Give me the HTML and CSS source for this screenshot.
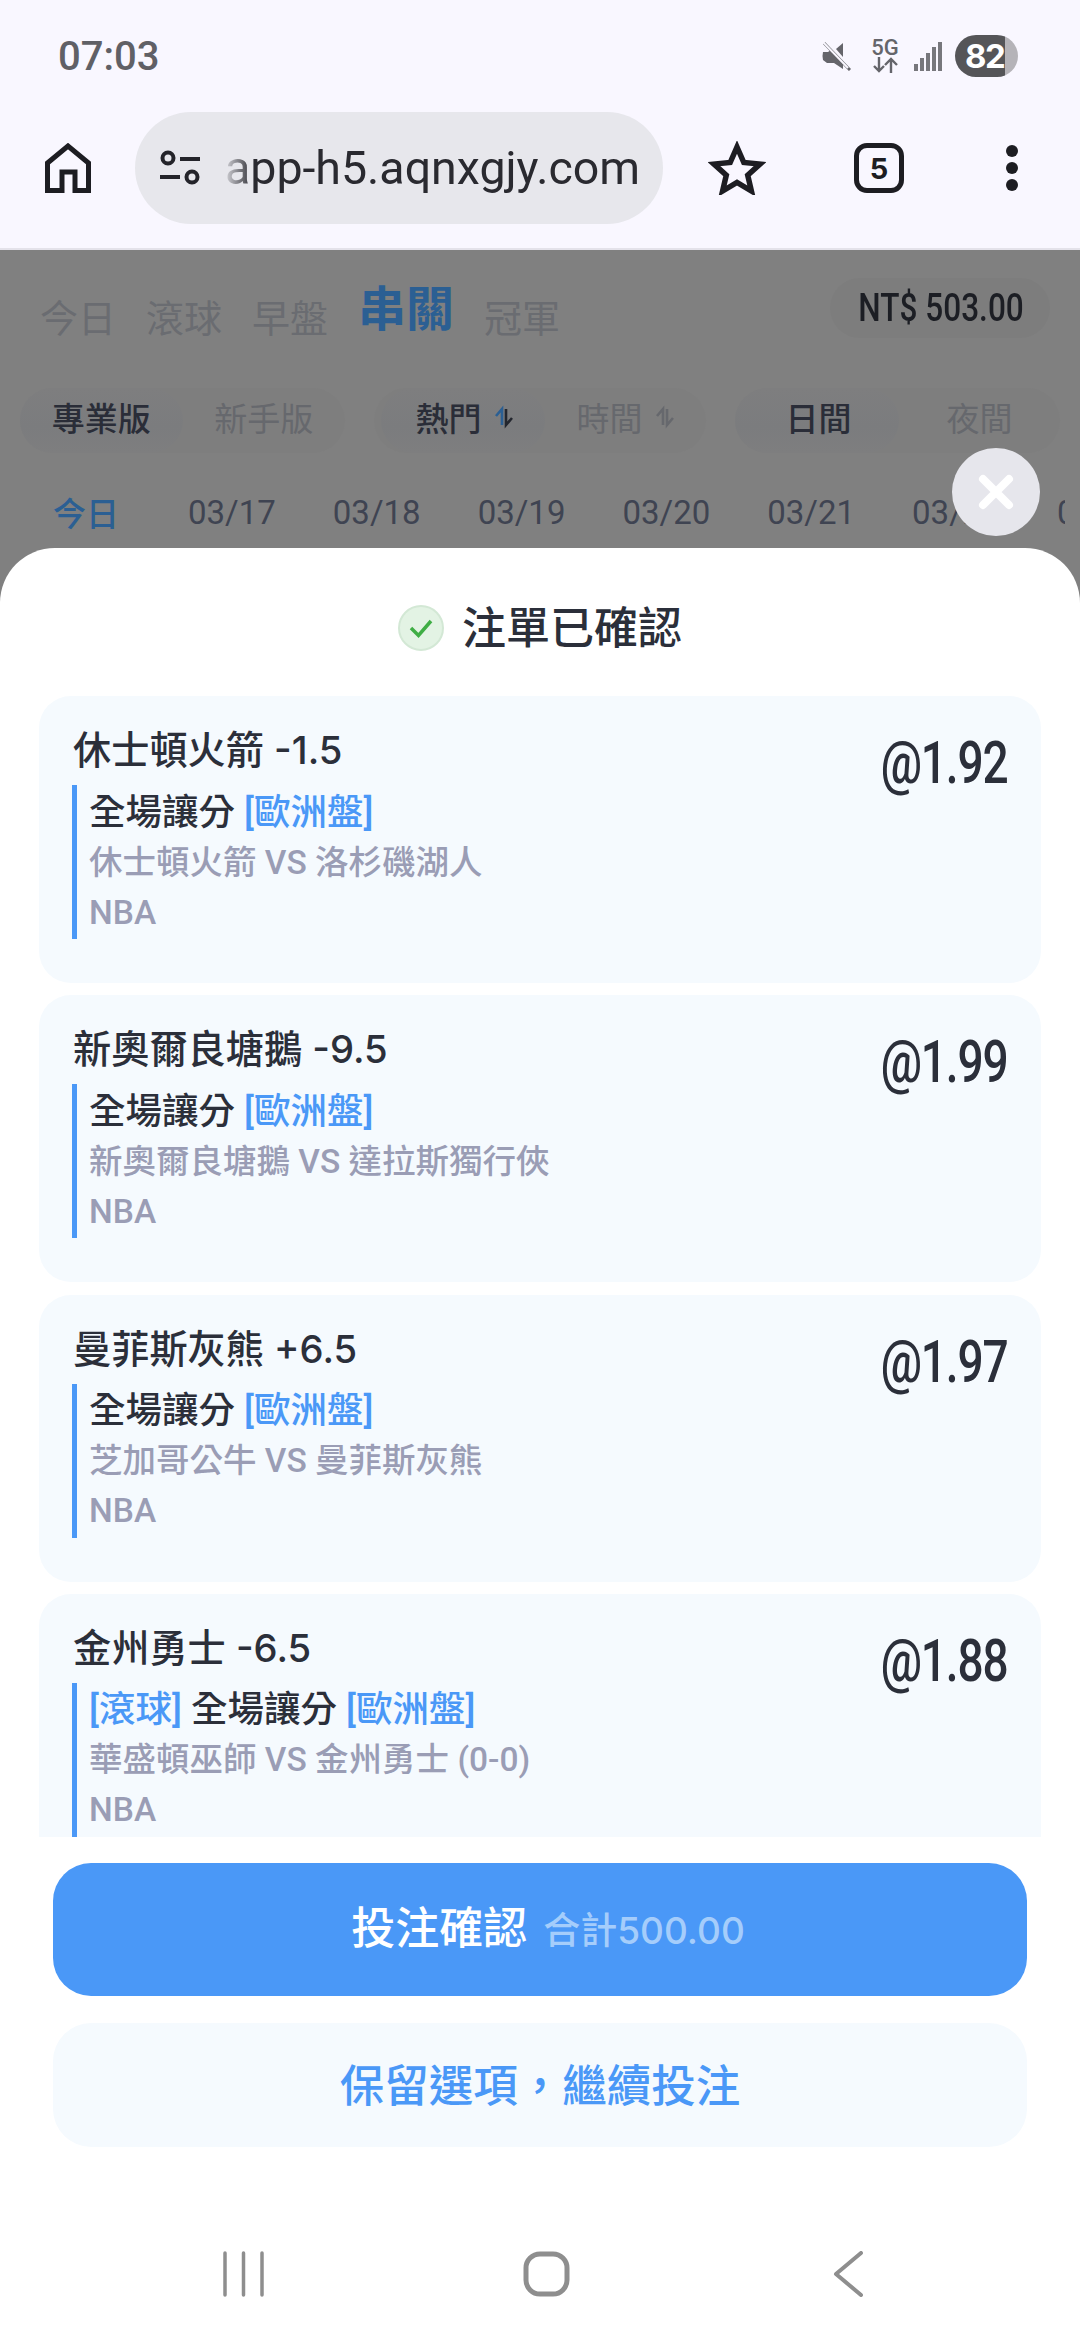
FILE: index.html
```html
<!DOCTYPE html>
<html lang="zh-Hant">
<head>
<meta charset="utf-8">
<title>注單已確認</title>
<link rel="stylesheet" href="styles.css">
</head>
<body>
<div class="phone">
  <header class="chrome">
    <div class="status">
      <span class="clock">07:03</span>
      <div class="status-icons">
        <svg class="ic-mute" width="30" height="30" viewBox="0 0 30 30"><path d="M1 11h6l3-2 12 13v6l-9-6H6l-4-3q-1-4 0-8z" fill="#65656b"/><path d="M15 8l7-6v14z" fill="#65656b"/><path d="M3 2l26 27" stroke="#65656b" stroke-width="3"/><path d="M1 0l26 27" stroke="#f9f7ff" stroke-width="2"/></svg>
        <div class="net"><span class="net-label">5G</span><svg width="26" height="16" viewBox="0 0 26 16"><path d="M7 0v14M2 9l5 5 5-5M19 16V2M13 8l6-6 6 6" fill="none" stroke="#65656b" stroke-width="2.4"/></svg></div>
        <svg class="ic-signal" width="28" height="29" viewBox="0 0 28 29"><g fill="#77777c"><rect x="0" y="22" width="4" height="7"/><rect x="6" y="16" width="4" height="13"/><rect x="12" y="11" width="4" height="18"/><rect x="18" y="5" width="4" height="24"/><rect x="24" y="0" width="4" height="29"/></g></svg>
        <span class="battery">82</span>
      </div>
    </div>
    <div class="toolbar">
      <svg class="ic-home" width="46" height="50" viewBox="0 0 46 50"><path d="M2.500 47.500V20L23 3l20.500 17v27.500H30V29H17v18.500z" fill="none" stroke="#1d1d22" stroke-width="5"/></svg>
      <div class="url-bar">
        <svg class="ic-tune" width="44" height="36" viewBox="0 0 44 36"><g fill="none" stroke="#24242a" stroke-width="4"><circle cx="10" cy="8" r="5.500"/><path d="M22 9h20M2 27h20"/><circle cx="34" cy="27" r="5.500"/></g></svg>
        <span class="url">app-h5.aqnxgjy.com</span>
      </div>
      <svg class="ic-star" width="58" height="54" viewBox="0 0 58 54"><path d="M29 6l6.800 15.500 16.200 1.600-12.300 11 3.700 15.900L29 41.500 14.600 50l3.700-15.900L6 23.100l16.200-1.600z" fill="none" stroke="#1d1d22" stroke-width="5.500"/></svg>
      <span class="tabs-count">5</span>
      <div class="dots"><i></i><i></i><i></i></div>
    </div>
  </header>

  <section class="backdrop">
    <div class="top-row">
      <nav class="main-tabs">
        <span>今日</span><span>滾球</span><span>早盤</span><span class="main-active">串關</span><span>冠軍</span>
      </nav>
      <span class="balance"><span class="balance-text">NT$ 503.00</span></span>
    </div>
    <div class="seg-row">
      <div class="seg"><span class="seg-item seg-on">專業版</span><span class="seg-item">新手版</span></div>
      <div class="seg seg-sort">
        <span class="seg-item seg-on">熱門<svg class="sort" width="20" height="24" viewBox="0 0 20 24"><path d="M8 20V4L2 11" fill="none" stroke="#2b5f93" stroke-width="2.600"/><path d="M12 4v16l6-7" fill="none" stroke="#23262e" stroke-width="2.600"/></svg></span>
        <span class="seg-item">時間<svg class="sort" width="20" height="24" viewBox="0 0 20 24"><path d="M8 20V4L2 11M12 4v16l6-7" fill="none" stroke="#66686d" stroke-width="2.600"/></svg></span>
      </div>
      <div class="seg seg-day"><span class="seg-item seg-on">日間</span><span class="seg-item">夜間</span></div>
    </div>
    <div class="date-row">
      <span class="date-today">今日</span><span>03/17</span><span>03/18</span><span>03/19</span><span>03/20</span><span>03/21</span><span>03/22</span><span>03/23</span>
    </div>
  </section>

  <button class="close" aria-label="close"><svg width="36" height="36" viewBox="0 0 36 36"><path d="M5 5l26 26M31 5L5 31" stroke="#fff" stroke-width="8" stroke-linecap="round"/></svg></button>

  <section class="sheet">
    <h1 class="sheet-title">
      <svg width="46" height="46" viewBox="0 0 46 46"><circle cx="23" cy="23" r="22" fill="#e3f3e4" stroke="#d3e8d5" stroke-width="2"/><path d="M13 23l7.500 7.500L33 16" fill="none" stroke="#3fae45" stroke-width="3.500"/></svg>
      注單已確認
    </h1>
    <div class="list">
      <article class="card">
        <div class="card-main">
          <div class="pick">休士頓火箭 -1.5</div>
          <div class="detail">
            <div class="market">全場讓分 <b>[歐洲盤]</b></div>
            <div class="match">休士頓火箭 VS 洛杉磯湖人</div>
            <div class="match">NBA</div>
          </div>
        </div>
        <span class="odds">@1.92</span>
      </article>
      <article class="card">
        <div class="card-main">
          <div class="pick">新奧爾良塘鵝 -9.5</div>
          <div class="detail">
            <div class="market">全場讓分 <b>[歐洲盤]</b></div>
            <div class="match">新奧爾良塘鵝 VS 達拉斯獨行俠</div>
            <div class="match">NBA</div>
          </div>
        </div>
        <span class="odds">@1.99</span>
      </article>
      <article class="card">
        <div class="card-main">
          <div class="pick">曼菲斯灰熊 +6.5</div>
          <div class="detail">
            <div class="market">全場讓分 <b>[歐洲盤]</b></div>
            <div class="match">芝加哥公牛 VS 曼菲斯灰熊</div>
            <div class="match">NBA</div>
          </div>
        </div>
        <span class="odds">@1.97</span>
      </article>
      <article class="card">
        <div class="card-main">
          <div class="pick">金州勇士 -6.5</div>
          <div class="detail">
            <div class="market"><b>[滾球]</b> 全場讓分 <b>[歐洲盤]</b></div>
            <div class="match">華盛頓巫師 VS 金州勇士 (0-0)</div>
            <div class="match">NBA</div>
          </div>
        </div>
        <span class="odds">@1.88</span>
      </article>
    </div>
    <div class="actions">
      <button class="btn-primary">投注確認<small>合計500.00</small></button>
      <button class="btn-soft">保留選項，繼續投注</button>
    </div>
    <div class="navbar">
      <svg width="303" height="46" viewBox="0 0 303 46"><path d="M133 2v42M151.500 2v42M170 2v42" stroke="#8e8e8e" stroke-width="3.500" stroke-linecap="round"/></svg>
      <svg width="303" height="46" viewBox="0 0 303 46"><rect x="131" y="3" width="41" height="40" rx="14" fill="none" stroke="#8e8e8e" stroke-width="5"/></svg>
      <svg width="303" height="46" viewBox="0 0 303 46"><path d="M163 2l-25 21 25 21" fill="none" stroke="#8e8e8e" stroke-width="4" stroke-linecap="round" stroke-linejoin="round"/></svg>
    </div>
  </section>
</div>
</body>
</html>
```
FILE: styles.css
```css
* { box-sizing: border-box; }
html, body { margin: 0; padding: 0; }
body { font-family: Inter, "Noto Sans CJK TC", sans-serif; background: #fff; }
.phone { position: relative; width: 1080px; height: 2340px; overflow: hidden; background: #808080; }

.chrome { background: #f9f7ff; height: 250px; border-bottom: 2px solid #e4e2ea; }
.status { height: 112px; display: flex; align-items: center; justify-content: space-between; padding: 0 62px 0 58px; }
.clock { font: 500 40px Roboto, sans-serif; color: #606066; }
.status-icons { display: flex; align-items: center; }
.ic-mute { margin-right: 21px; }
.net { display: flex; flex-direction: column; align-items: center; margin-right: 16px; width: 26px; }
.net-label { font: 500 22px/18px Roboto, sans-serif; color: #65656b; }
.ic-signal { margin-right: 13px; }
.battery { width: 63px; height: 42px; border-radius: 21px; background: linear-gradient(to right, #555558 80%, #b5b3b8 80%); color: #fff; font: 700 33px/42px Inter, sans-serif; padding-left: 10px; letter-spacing: -1.500px; }

.toolbar { height: 112px; display: flex; align-items: center; padding-left: 45px; }
.url-bar { width: 528px; height: 112px; margin-left: 44px; border-radius: 56px; background: #e7e7ec; display: flex; align-items: center; padding-left: 23px; }
.url { margin-left: 23px; font: 400 46.500px Roboto, sans-serif; color: #2a2a30; white-space: nowrap; -webkit-mask-image: linear-gradient(to right, rgba(0,0,0,.1) 0, #000 28px); mask-image: linear-gradient(to right, rgba(0,0,0,.1) 0, #000 28px); }
.ic-star { margin-left: 45px; }
.tabs-count { width: 50px; height: 50px; margin-left: 88px; border: 5.500px solid #1d1d22; border-radius: 13px; display: flex; align-items: center; justify-content: center; font: 700 29px Inter, sans-serif; color: #1d1d22; }
.dots { margin-left: 102px; display: flex; flex-direction: column; gap: 5px; }
.dots i { display: block; width: 12px; height: 12px; border-radius: 50%; background: #1d1d22; }

.backdrop { background: #808080; padding-top: 28px; }
.top-row { height: 60px; display: flex; justify-content: space-between; align-items: stretch; padding: 0 30px 0 40px; }
.main-tabs { display: flex; align-items: flex-end; gap: 30px; font-size: 38px; line-height: 56px; color: #6a6c71; }
.main-tabs span { height: 56px; transform: translateY(8px); }
.main-tabs .main-active { font-size: 48px; font-weight: 700; color: #2b5f93; line-height: 56px; transform: translateY(-1px); }
.balance { width: 220px; background: #7d7d7d; border-radius: 30px; display: flex; align-items: center; justify-content: center; }
.balance-text { display: inline-block; font: 500 39px Roboto, sans-serif; color: #1c1e24; transform: scaleX(.81); white-space: nowrap; padding-left: 2px; }

.seg-row { display: flex; gap: 29px; padding: 0 20px; margin-top: 50px; }
.seg { flex: 1; height: 65px; border-radius: 33px; background: #7e7e7e; display: flex; }
.seg-item { flex: 1; display: flex; align-items: center; justify-content: center; gap: 12px; padding-bottom: 7px; font-size: 33px; color: #66686d; border-radius: 33px; }
.seg-on { color: #2a2d38; font-weight: 500; background: linear-gradient(to bottom, #7e7e7f, #7b7c7e 60%, #7e7e7f); }
.seg-sort { padding-left: 7px; }
.seg-sort .seg-on { padding-left: 3px; }
.seg-day .seg-on { padding-left: 3px; }
.sort { flex: none; }

.date-row { display: flex; align-items: center; gap: 57px; height: 60px; margin: 30px 15px 0 0; padding: 0 0 2px 53px; font: 400 33px Roboto, sans-serif; color: #3f4452; white-space: nowrap; overflow: hidden; }
.date-today { font: 500 33px Inter, "Noto Sans CJK TC", sans-serif; color: #2b5f93; margin-right: 12px; }

.close { position: absolute; left: 952px; top: 448px; width: 88px; height: 88px; border: 0; border-radius: 50%; background: #e6e6ec; display: flex; align-items: center; justify-content: center; padding: 0; z-index: 3; }

.sheet { position: absolute; left: 0; right: 0; bottom: 0; height: 1792px; background: #fff; border-radius: 55px 55px 0 0; display: flex; flex-direction: column; }
.sheet-title { margin: 0; padding: 50px 0 38px; height: 148px; display: flex; align-items: center; justify-content: center; gap: 18px; font-size: 44px; font-weight: 500; line-height: 60px; color: #2b2f3a; }

.list { height: 1141px; padding: 0 39px; overflow: hidden; display: flex; flex-direction: column; gap: 12.330px; }
.card { flex: none; height: 287px; background: #f5fafe; border-radius: 32px; padding: 26px 34px 0 33px; display: flex; justify-content: space-between; align-items: flex-start; }
.pick { font-size: 38.200px; line-height: 56px; color: #2b2f3a; font-weight: 500; padding-left: 1px; }
.detail { margin-top: 7px; border-left: 5px solid #4a98f7; padding: 2.500px 0 1.500px 12px; font-family: Roboto, "Noto Sans CJK TC", sans-serif; }
.market { font-size: 36.500px; line-height: 50px; color: #2b2f3a; font-weight: 500; }
.market b { font-weight: 500; color: #4a98f7; }
.match { font-size: 33.500px; line-height: 50px; color: #9a9db5; font-weight: 500; }
.odds { display: inline-block; margin-top: 8px; font: 500 59px/66px Roboto, sans-serif; letter-spacing: -1.500px; color: #2b2f3a; transform: scaleX(.78); transform-origin: right center; }

.actions { padding: 26px 53px 0; display: flex; flex-direction: column; gap: 27px; }
.btn-primary, .btn-soft { border: 0; display: block; width: 100%; font-family: Inter, "Noto Sans CJK TC", sans-serif; }
.btn-primary { height: 133px; border-radius: 38px; background: #4a98f7; color: #fff; font-size: 44px; font-weight: 500; padding: 0 0 9px 16px; }
.btn-primary small { font-size: 37px; font-weight: 500; color: #a5cdfb; margin-left: 16px; }
.btn-soft { height: 124px; border-radius: 38px; background: #f5fafe; color: #4a98f7; font-size: 44.500px; font-weight: 500; padding: 0 0 5px; }

.navbar { padding: 104px 0 0 12px; display: flex; justify-content: center; }
```
